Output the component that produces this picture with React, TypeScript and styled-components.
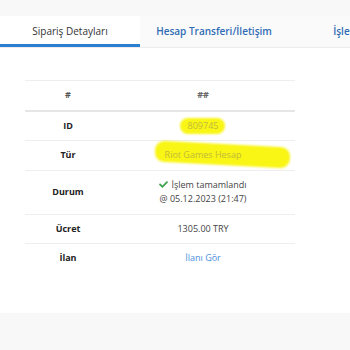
import React from "react";
import styled, { createGlobalStyle } from "styled-components";
import { FaCheck } from "react-icons/fa";

const Global = createGlobalStyle`
  html, body { margin: 0; padding: 0; background: #f8f8f8; }
  body { font-family: "Open Sans", "Noto Sans", sans-serif; }
`;

const Page = styled.div`
  width: 350px;
  height: 350px;
  overflow: hidden;
  padding-top: 16px;
  box-sizing: border-box;
  background: #f8f8f8;
`;

const TabBar = styled.div`
  display: flex;
  height: 31px;
  background: #fafafa;
  border-bottom: 1px solid #ececec;
  white-space: nowrap;
  overflow: hidden;
`;

const Tab = styled.div<{ $active?: boolean; $w: number }>`
  flex: 0 0 ${(p) => p.$w}px;
  display: flex;
  align-items: center;
  justify-content: center;
  box-sizing: border-box;
  font-size: 10px;
  font-weight: ${(p) => (p.$active ? 400 : 600)};
  color: ${(p) => (p.$active ? "#333" : "#2f6cb4")};
  background: ${(p) => (p.$active ? "#fff" : "transparent")};
  border-bottom: 3px solid ${(p) => (p.$active ? "#2b7fd0" : "transparent")};
  padding-top: 2px;
`;

const Content = styled.div`
  background: #fff;
  padding: 32px 25px 0;
  height: 265px;
  box-sizing: border-box;
`;

const Table = styled.table`
  width: 270px;
  border-collapse: collapse;
  font-size: 9px;
  color: #444;
  border-top: 1px solid #eeeeee;
`;

const Row = styled.tr<{ $head?: boolean }>`
  border-bottom: ${(p) => (p.$head ? "2px solid #e6e6e6" : "1px solid #eeeeee")};
  &:last-child { border-bottom: none; }
`;

const Label = styled.td<{ $head?: boolean }>`
  width: 86px;
  text-align: center;
  font-weight: 700;
  color: ${(p) => (p.$head ? "#555" : "#222")};
  padding: 7px 0;
  line-height: 14px;
`;

const Value = styled.td<{ $head?: boolean }>`
  text-align: center;
  padding: 7px 0;
  line-height: 14.5px;
  font-weight: ${(p) => (p.$head ? 700 : 400)};
  color: ${(p) => (p.$head ? "#666" : "#444")};
`;

const Marked = styled.span<{ $wide?: boolean }>`
  position: relative;
  display: inline-block;
  line-height: 14px;
  color: #c2bb3c;
  &::before {
    content: "";
    position: absolute;
    left: ${(p) => (p.$wide ? -10 : -8)}px;
    right: ${(p) => (p.$wide ? -48 : -7)}px;
    top: ${(p) => (p.$wide ? -4 : -1)}px;
    bottom: ${(p) => (p.$wide ? -3 : -1)}px;
    background: #f9f514;
    border-radius: 9px;
    filter: blur(0.8px);
    z-index: 0;
    transform: rotate(${(p) => (p.$wide ? 3 : 0)}deg);
  }
  & > span { position: relative; z-index: 1; }
`;

const Check = styled(FaCheck)`
  color: #3fa34d;
  font-size: 9px;
  vertical-align: -1px;
  margin-right: 3px;
`;

const Link = styled.a`
  color: #4a8fdc;
  text-decoration: none;
`;

export default function App() {
  return (
    <Page>
      <Global />
      <TabBar>
        <Tab $active $w={140}>Sipariş Detayları</Tab>
        <Tab $w={148}>Hesap Transferi/İletişim</Tab>
        <Tab $w={157}>İşlem Geçmişi</Tab>
      </TabBar>
      <Content>
        <Table>
          <tbody>
            <Row $head>
              <Label $head>#</Label>
              <Value $head>##</Value>
            </Row>
            <Row>
              <Label>ID</Label>
              <Value>
                <Marked><span>809745</span></Marked>
              </Value>
            </Row>
            <Row>
              <Label>Tür</Label>
              <Value>
                <Marked $wide><span>Riot Games Hesap</span></Marked>
              </Value>
            </Row>
            <Row>
              <Label>Durum</Label>
              <Value>
                <Check />İşlem tamamlandı
                <br />@ 05.12.2023 (21:47)
              </Value>
            </Row>
            <Row>
              <Label>Ücret</Label>
              <Value>1305.00 TRY</Value>
            </Row>
            <Row>
              <Label>İlan</Label>
              <Value>
                <Link href="#">İlanı Gör</Link>
              </Value>
            </Row>
          </tbody>
        </Table>
      </Content>
    </Page>
  );
}
